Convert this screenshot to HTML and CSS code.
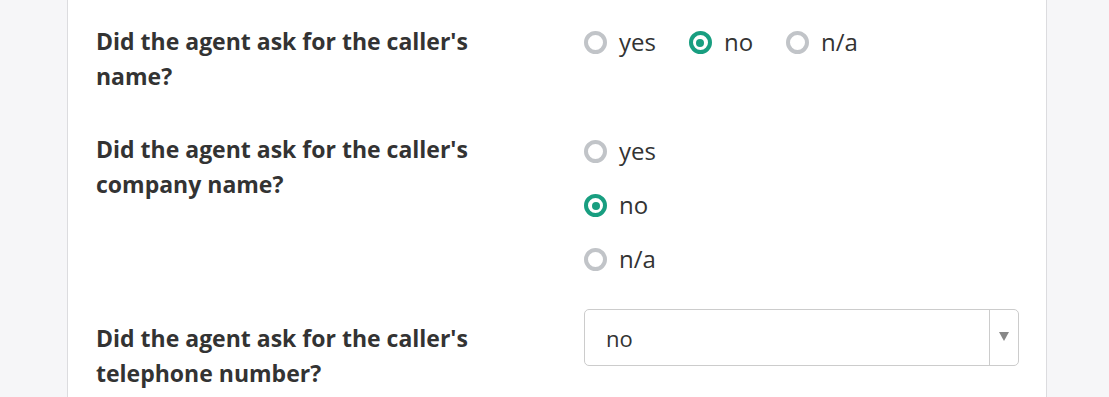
FILE: index.html
```html
<!DOCTYPE html>
<html>
<head>
<meta charset="utf-8">
<link rel="stylesheet" href="styles.css">
</head>
<body>
<div class="panel">
  <div class="row row-first">
    <div class="q">Did the agent ask for the caller's name?</div>
    <div class="radios inline">
      <label class="opt"><span class="radio"></span>yes</label>
      <label class="opt"><span class="radio checked"></span>no</label>
      <label class="opt"><span class="radio"></span>n/a</label>
    </div>
  </div>
  <div class="row">
    <div class="q">Did the agent ask for the caller's company name?</div>
    <div class="radios stacked">
      <label class="opt"><span class="radio"></span>yes</label>
      <label class="opt"><span class="radio checked"></span>no</label>
      <label class="opt"><span class="radio"></span>n/a</label>
    </div>
  </div>
  <div class="row row-select">
    <div class="q">Did the agent ask for the caller's telephone number?</div>
    <div class="select">
      <span class="select-value">no</span>
      <span class="select-arrow"><span class="tri"></span></span>
    </div>
  </div>
</div>
</body>
</html>
```

FILE: styles.css
```css
html, body {
  margin: 0;
  padding: 0;
  background: #f6f6f8;
  font-family: "Open Sans", "Liberation Sans", sans-serif;
  color: #333;
}
.panel {
  margin-left: 67px;
  width: 980px;
  min-height: 397px;
  box-sizing: border-box;
  background: #fff;
  border-left: 1px solid #dcdcdf;
  border-right: 1px solid #dcdcdf;
  padding: 24px 27px 0 28px;
}
.row {
  display: grid;
  grid-template-columns: 488px 1fr;
  align-items: start;
  margin-bottom: 38px;
}
.q {
  font-weight: 700;
  font-size: 23px;
  line-height: 35px;
  width: 430px;
}
.radios.inline {
  display: flex;
}
.radios.inline .opt {
  margin-right: 33px;
}
.radios.stacked {
  display: flex;
  flex-direction: column;
  gap: 19px;
  margin-top: 1px;
}
.opt {
  display: flex;
  align-items: center;
  height: 35px;
  font-size: 24px;
  line-height: 1;
}
.radio {
  width: 23px;
  height: 23px;
  box-sizing: border-box;
  border: 4px solid #c1c4c8;
  border-radius: 50%;
  margin: 2px 12px 0 0;
  position: relative;
}
.radio.checked {
  border-color: #189e80;
}
.radio.checked::after {
  content: "";
  position: absolute;
  left: 3.5px;
  top: 3.5px;
  width: 8px;
  height: 8px;
  border-radius: 50%;
  background: #189e80;
}
.row-select {
  margin-top: -5px;
}
.row-select .q {
  padding-top: 12px;
}
.select {
  height: 57px;
  box-sizing: border-box;
  border: 1px solid #ccc;
  border-radius: 5px;
  display: flex;
  align-items: stretch;
  font-size: 22px;
}
.select-value {
  flex: 1;
  display: flex;
  align-items: center;
  padding-left: 21px;
}
.select-arrow {
  width: 28px;
  border-left: 1px solid #ccc;
  display: flex;
  align-items: center;
  justify-content: center;
}
.tri {
  width: 0;
  height: 0;
  border-left: 5px solid transparent;
  border-right: 5px solid transparent;
  border-top: 9px solid #888;
  margin-top: -2px;
}
```
